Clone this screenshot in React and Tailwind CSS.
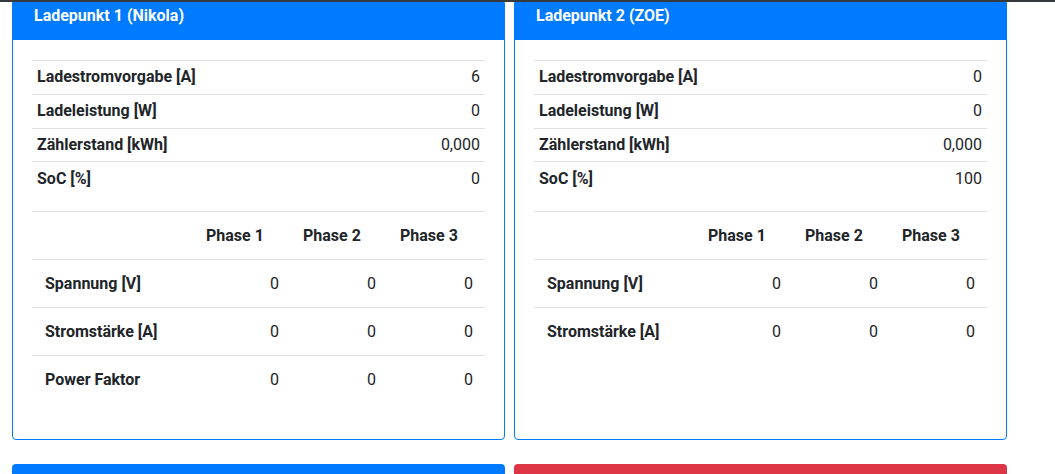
import React from 'react';

const points = [
  {
    title: 'Ladepunkt 1 (Nikola)',
    info: [
      ['Ladestromvorgabe [A]', '6'],
      ['Ladeleistung [W]', '0'],
      ['Zählerstand [kWh]', '0,000'],
      ['SoC [%]', '0'],
    ],
    phases: [
      ['Spannung [V]', '0', '0', '0'],
      ['Stromstärke [A]', '0', '0', '0'],
      ['Power Faktor', '0', '0', '0'],
    ],
  },
  {
    title: 'Ladepunkt 2 (ZOE)',
    info: [
      ['Ladestromvorgabe [A]', '0'],
      ['Ladeleistung [W]', '0'],
      ['Zählerstand [kWh]', '0,000'],
      ['SoC [%]', '100'],
    ],
    phases: [
      ['Spannung [V]', '0', '0', '0'],
      ['Stromstärke [A]', '0', '0', '0'],
    ],
  },
];

function ChargePointCard({ cp }) {
  return (
    <div className="w-[493px] flex flex-col border border-[#007bff] rounded-b-[4px] bg-white">
      <div className="bg-[#007bff] text-white font-bold text-[16px] leading-6 pl-[21px] pt-[1px] pb-[12px]">
        {cp.title}
      </div>
      <div className="px-[19px] pt-[20px] pb-[20px] flex-1">
        {/* Infos */}
        <table className="w-full border-collapse mb-4">
          <tbody>
            {cp.info.map(([label, value]) => (
              <tr key={label} className="border-t border-[#dee2e6]">
                <th className="text-left font-bold px-[5px] py-[4.4px] leading-6">{label}</th>
                <td className="text-right px-[5px] py-[4.4px] leading-6">{value}</td>
              </tr>
            ))}
          </tbody>
        </table>

        {/* Phasen */}
        <table className="w-full border-collapse table-fixed mb-4">
          <thead>
            <tr className="border-t border-[#dee2e6]">
              <th className="w-[162px]" />
              <th className="text-left font-bold px-3 py-[11.5px] leading-6">Phase 1</th>
              <th className="text-left font-bold px-3 py-[11.5px] leading-6">Phase 2</th>
              <th className="text-left font-bold px-3 py-[11.5px] leading-6">Phase 3</th>
            </tr>
          </thead>
          <tbody>
            {cp.phases.map(([label, a, b, c]) => (
              <tr key={label} className="border-t border-[#dee2e6]">
                <th className="text-left font-bold px-[13px] py-[11.5px] leading-6">{label}</th>
                <td className="text-right px-3 py-[11.5px] leading-6">{a}</td>
                <td className="text-right px-3 py-[11.5px] leading-6">{b}</td>
                <td className="text-right px-3 py-[11.5px] leading-6">{c}</td>
              </tr>
            ))}
          </tbody>
        </table>
      </div>
    </div>
  );
}

export default function App() {
  return (
    <div className="h-[474px] bg-white text-[#212529] text-[16px] overflow-hidden" style={{ fontFamily: 'Roboto, "Liberation Sans", sans-serif' }}>
      <div className="h-[2px] bg-[#343a40]" />
      <div className="flex gap-[9px] pl-3 items-stretch">
        {points.map((cp) => (
          <ChargePointCard key={cp.title} cp={cp} />
        ))}
      </div>
      <div className="flex gap-[9px] pl-3 mt-[24px]">
        <div className="w-[493px] h-[10px] bg-[#007bff] rounded-t-[4px]" />
        <div className="w-[493px] h-[10px] bg-[#dc3545] rounded-t-[4px]" />
      </div>
    </div>
  );
}
